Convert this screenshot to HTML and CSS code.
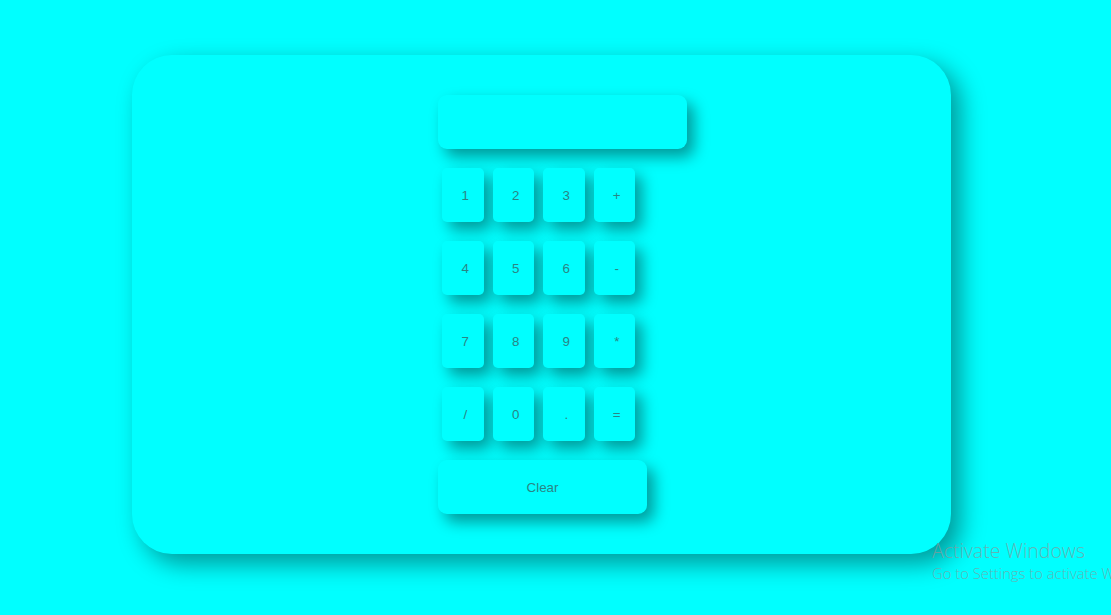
FILE: index.html
```html
<!DOCTYPE html>
<html>
<head>
<meta charset="utf-8">
<link rel="stylesheet" href="styles.css">
</head>
<body>
<div class="card">
  <div class="inner">
    <div class="display"></div>
    <div class="keys">
      <button class="key">1</button><button class="key">2</button><button class="key">3</button><button class="key">+</button>
      <button class="key">4</button><button class="key">5</button><button class="key">6</button><button class="key">-</button>
      <button class="key">7</button><button class="key">8</button><button class="key">9</button><button class="key">*</button>
      <button class="key">/</button><button class="key">0</button><button class="key">.</button><button class="key">=</button>
    </div>
    <button class="clear">Clear</button>
  </div>
</div>
<div class="watermark">
  <div class="wm-title">Activate Windows</div>
  <div class="wm-sub">Go to Settings to activate Windows.</div>
</div>
</body>
</html>
```
FILE: styles.css
```css
html, body {
  margin: 0;
  padding: 0;
  background: #00ffff;
  width: 1111px;
  height: 615px;
  overflow: hidden;
}
body {
  padding: 55px 0 0 132px;
  box-sizing: border-box;
  font-family: "Liberation Sans", Arial, sans-serif;
}
.card {
  width: 819px;
  height: 499px;
  box-sizing: border-box;
  border-radius: 40px;
  background: #00ffff;
  box-shadow: 10px 10px 25px rgba(0, 0, 0, 0.4);
  padding: 40px 0 0 306px;
}
.inner {
  display: flex;
  flex-direction: column;
  width: 249px;
}
.display {
  width: 249px;
  height: 54px;
  border-radius: 9px;
  background: #00ffff;
  box-shadow: 7px 8px 15px rgba(0, 0, 0, 0.4);
}
.keys {
  display: grid;
  grid-template-columns: repeat(4, 41.5px);
  grid-auto-rows: 54px;
  column-gap: 9px;
  row-gap: 19px;
  margin: 19px 0 0 4px;
}
.key, .clear {
  border: none;
  background: #00ffff;
  color: #2a8585;
  font-family: "Liberation Sans", Arial, sans-serif;
  font-size: 13.33px;
  padding: 0 0 0 5px;
  border-radius: 5px;
  box-shadow: 7px 8px 15px rgba(0, 0, 0, 0.4);
}
.clear {
  margin-top: 19px;
  width: 209px;
  height: 54px;
  border-radius: 9px;
  padding: 0;
}
.watermark {
  position: absolute;
  left: 932px;
  top: 538px;
  color: rgba(130, 155, 155, 0.75);
  font-family: "Open Sans", "Noto Sans", sans-serif;
  font-weight: 300;
  white-space: nowrap;
}
.wm-title {
  font-size: 19.5px;
  line-height: 25px;
}
.wm-sub {
  font-size: 14.8px;
  line-height: 20px;
}
```
